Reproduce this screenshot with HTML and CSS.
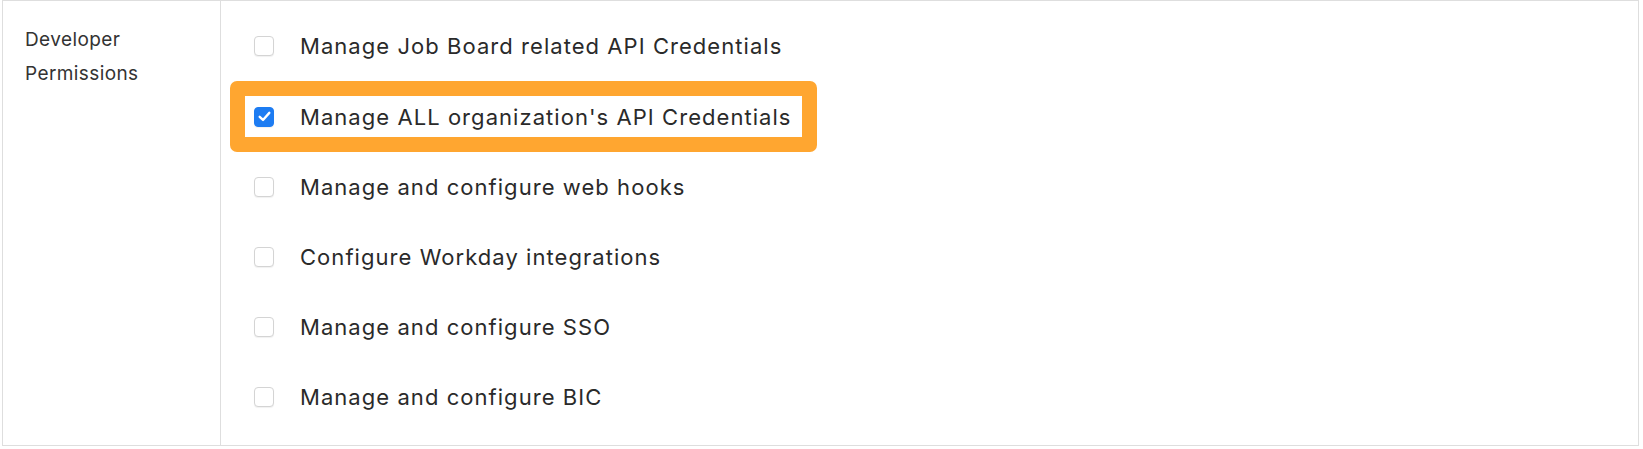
FILE: index.html
```html
<!DOCTYPE html>
<html lang="en">
<head>
    <meta charset="UTF-8">
    <meta name="viewport" content="width=device-width, initial-scale=1.0">
    <title>Developer Permissions</title>
    <link rel="stylesheet" href="styles.css">
</head>
<body>
    <div class="perm-table">
        <div class="perm-label">Developer<br>Permissions</div>
        <div class="perm-list">
            <label class="perm-row">
                <span class="box"></span>
                <span class="text">Manage Job Board related API Credentials</span>
            </label>
            <div class="perm-row highlight">
                <label class="inner">
                    <span class="box checked">
                        <svg width="15" height="15" viewBox="0 0 14 14"><path d="M2.5 7.3 L5.6 10.2 L11.5 3.6" fill="none" stroke="#fff" stroke-width="2.2" stroke-linecap="round" stroke-linejoin="round"/></svg>
                    </span>
                    <span class="text">Manage ALL organization's API Credentials</span>
                </label>
            </div>
            <label class="perm-row">
                <span class="box"></span>
                <span class="text">Manage and configure web hooks</span>
            </label>
            <label class="perm-row">
                <span class="box"></span>
                <span class="text">Configure Workday integrations</span>
            </label>
            <label class="perm-row">
                <span class="box"></span>
                <span class="text">Manage and configure SSO</span>
            </label>
            <label class="perm-row">
                <span class="box"></span>
                <span class="text">Manage and configure BIC</span>
            </label>
        </div>
    </div>
</body>
</html>
```

FILE: styles.css
```css
body { margin: 0; background: #fff; font-family: Inter, "Noto Sans", sans-serif; color: #222; }
.perm-table { display: flex; margin-left: 2px; width: 1637px; height: 446px; box-sizing: border-box; border: 1px solid #dedede; }
.perm-label { width: 218px; flex: none; box-sizing: border-box; border-right: 1px solid #dedede; padding: 22px 0 0 22px; font-size: 19px; line-height: 34px; letter-spacing: 0.4px; color: #333; }
.perm-list { flex: 1; padding: 10px 0 0 33px; }
.perm-row { display: flex; align-items: center; height: 70px; font-size: 22px; letter-spacing: 1.05px; color: #2a2a2a; cursor: pointer; }
.box { width: 18px; height: 18px; flex: none; border: 1.5px solid #d4d4d4; border-radius: 4px; background: #fff; box-shadow: 0 1px 1px rgba(0,0,0,0.06); display: flex; align-items: center; justify-content: center; }
.box.checked { background: #1d7cf2; border-color: #1d7cf2; }
.text { margin-left: 26px; }
.perm-row.highlight { display: block; height: auto; width: max-content; margin-left: -24px; padding: 15px; border-radius: 7px; background: #ffa630; }
.highlight .inner { display: flex; align-items: center; height: 41px; padding: 0 10px 0 9px; background: #fff; }
```
